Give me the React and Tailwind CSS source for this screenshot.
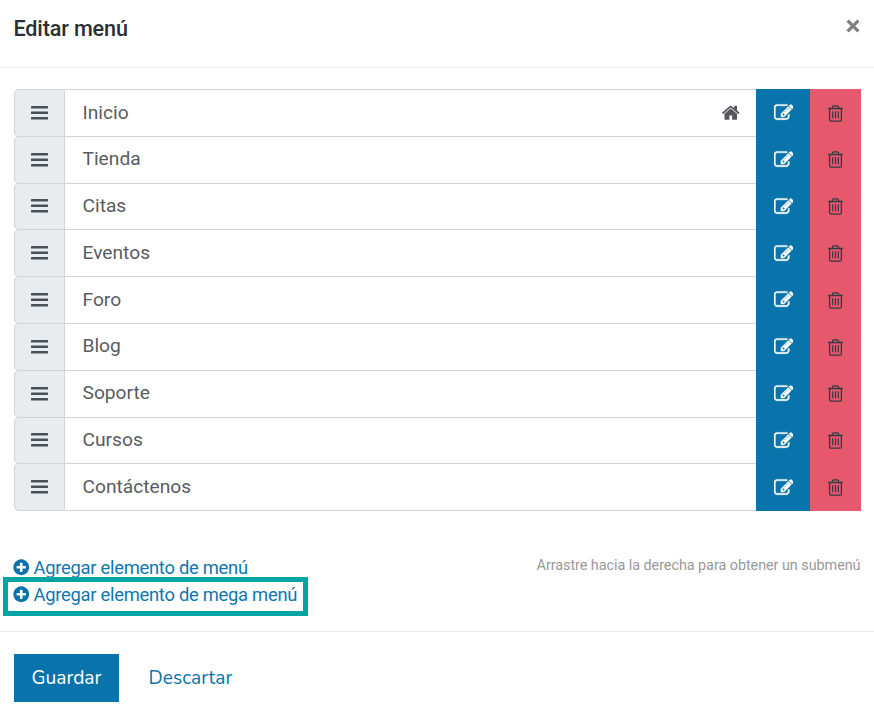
import React from "react";

const items = [
  { label: "Inicio", home: true },
  { label: "Tienda" },
  { label: "Citas" },
  { label: "Eventos" },
  { label: "Foro" },
  { label: "Blog" },
  { label: "Soporte" },
  { label: "Cursos" },
  { label: "Contáctenos" },
];

function Glyph({ d, className }) {
  return (
    <svg viewBox="0 0 1792 1792" fill="currentColor" className={className} aria-hidden="true">
      <path d={d} />
    </svg>
  );
}

const HOME =
  "M1472 992v480q0 26-19 45t-45 19h-384v-384h-256v384h-384q-26 0-45-19t-19-45v-480q0-1 .5-3t.5-3l575-474 575 474q1 2 1 6zm223-69l-62 74q-8 9-21 11h-3q-13 0-21-7l-692-577-692 577q-12 8-24 7-13-2-21-11l-62-74q-8-10-7-23.5t11-21.5l719-599q32-26 76-26t76 26l244 204v-195q0-14 9-23t23-9h192q14 0 23 9t9 23v408l219 182q10 8 11 21.5t-7 23.5z";
const EDIT =
  "M888 1184l116-116-152-152-116 116v56h96v96h56zm440-720q-16-16-33 1l-350 350q-17 17-1 33t33-1l350-350q17-17 1-33zm80 594v190q0 119-84.5 203.5t-203.5 84.5h-832q-119 0-203.5-84.5t-84.5-203.5v-832q0-119 84.5-203.5t203.5-84.5h832q63 0 117 25 15 7 18 23 3 17-9 29l-49 49q-14 14-32 8-23-6-45-6h-832q-66 0-113 47t-47 113v832q0 66 47 113t113 47h832q66 0 113-47t47-113v-126q0-13 9-22l64-64q15-15 35-7t20 29zm-96-738l288 288-672 672h-288v-288zm444 132l-92 92-288-288 92-92q28-28 68-28t68 28l152 152q28 28 28 68t-28 68z";
const PLUS =
  "M1344 960v-128q0-26-19-45t-45-19h-256v-256q0-26-19-45t-45-19h-128q-26 0-45 19t-19 45v256h-256q-26 0-45 19t-19 45v128q0 26 19 45t45 19h256v256q0 26 19 45t45 19h128q26 0 45-19t19-45v-256h256q26 0 45-19t19-45zm320-64q0 209-103 385.5t-279.5 279.5-385.5 103-385.5-103-279.5-279.5-103-385.5 103-385.5 279.5-279.5 385.5-103 385.5 103 279.5 279.5 103 385.5z";

function Bars() {
  return (
    <svg viewBox="0 0 17 14" fill="currentColor" className="h-[14px] w-[17px]" aria-hidden="true">
      <rect x="0" y="0" width="17" height="2.6" rx="0.6" />
      <rect x="0" y="5.5" width="17" height="2.6" rx="0.6" />
      <rect x="0" y="11" width="17" height="2.6" rx="0.6" />
    </svg>
  );
}

function Trash() {
  return (
    <svg viewBox="0 0 15 17" fill="none" stroke="currentColor" className="mt-[0.6px] h-[17px] w-[15px]" aria-hidden="true">
      <path d="M0.2 3.5h14.6M4.4 3.3V2.2a1.4 1.4 0 0 1 1.4-1.4h3.4a1.4 1.4 0 0 1 1.4 1.4v1.1M1.6 3.6v11.1a1.5 1.5 0 0 0 1.5 1.5h8.8a1.5 1.5 0 0 0 1.5-1.5V3.6" strokeWidth="1.3" />
      <path d="M4.7 6.2v7M7.5 6.2v7M10.3 6.2v7" strokeWidth="1.2" />
    </svg>
  );
}

function Row({ item }) {
  return (
    <li className="-mb-px flex h-[47.8px]">
      <span className="flex w-[51px] items-center justify-center rounded-l-[5px] border border-[#ced4da] bg-[#e9ecef] text-[#495057]">
        <Bars />
      </span>
      <span className="flex flex-1 items-center justify-between border-y border-[#d0d2d4] pr-[15.5px] pl-[17.5px] text-[19.2px] text-[#5a5c5f]">
        <span>{item.label}</span>
        {item.home && <Glyph d={HOME} className="h-[19.5px] w-[19.5px] text-[#54575b]" />}
      </span>
      <button className="flex w-[54px] items-center justify-center bg-[#0973ab] pl-px text-white">
        <svg viewBox="0 0 1792 1792" fill="currentColor" stroke="currentColor" strokeWidth="40" className="h-[19.5px] w-[19.5px]" aria-hidden="true">
          <path d={EDIT} />
        </svg>
      </button>
      <button className="flex w-[51px] items-center justify-center bg-[#e6586c] text-[#343a40]">
        <Trash />
      </button>
    </li>
  );
}

function AddLink({ children }) {
  return (
    <a href="#" className="flex h-[27px] items-center text-[18.4px] tracking-[-0.28px] whitespace-nowrap text-[#0f77ae]">
      <Glyph d={PLUS} className="-ml-[2px] mr-[3px] h-[18.5px] w-[18.5px] text-[#0973ab]" />
      {children}
    </a>
  );
}

export default function App() {
  return (
    <div className="h-[717px] w-[874px] overflow-hidden bg-white font-['Roboto',sans-serif] text-[19.2px]">
      <header className="flex h-[68px] items-start justify-between border-b border-[#e9ecef] pt-[14px] pr-[14px] pl-[13.5px]">
        <h1 className="text-[21.6px] leading-[29px] font-medium tracking-[-0.15px] text-[#2b2f33]">Editar menú</h1>
        <button aria-label="Cerrar" className="mt-[5px] text-[#7f7f7f]">
          <svg viewBox="0 0 14 14" className="h-[14px] w-[14px]" stroke="currentColor" strokeWidth="3.2">
            <path d="M1.6 1.6l10.8 10.8M12.4 1.6L1.6 12.4" />
          </svg>
        </button>
      </header>
      <main className="h-[564px] border-b border-[#e9ecef] pt-[21px] pr-[13.5px] pl-[14px]">
        <ul className="-mr-[0.5px]">
          {items.map((item) => (
            <Row key={item.label} item={item} />
          ))}
        </ul>
        <div className="mt-[44.8px] flex items-start justify-between">
          <div className="-mt-[0.9px]">
            <AddLink>Agregar elemento de menú</AddLink>
            <div className="relative">
              <AddLink>Agregar elemento de mega menú</AddLink>
              <div className="pointer-events-none absolute top-[-3.9px] left-[-11px] h-[39px] w-[305px] border-5 border-[#00a4a2]" />
            </div>
          </div>
          <p className="text-[14.4px] leading-[22px] tracking-[-0.05px] text-[#999999]">
            Arrastre hacia la derecha para obtener un submenú
          </p>
        </div>
      </main>
      <footer className="flex pt-[22px] pl-[14px] font-['Nunito','Lato',sans-serif]">
        <button className="h-12 w-[105px] bg-[#0973ab] text-[19.2px] text-white">Guardar</button>
        <button className="ml-[29.5px] h-12 text-[19.2px] text-[#0973ab]">Descartar</button>
      </footer>
    </div>
  );
}
